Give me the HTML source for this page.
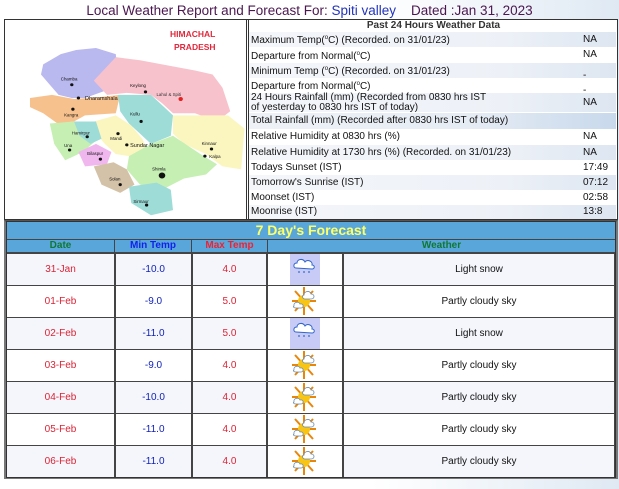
<!DOCTYPE html>
<html><head><meta charset="utf-8"><style>
*{margin:0;padding:0;box-sizing:border-box}
body{width:619px;height:479px;overflow:hidden;background:linear-gradient(90deg,#fff 0%,#fff 60%,#dfe9f3 100%);font-family:"Liberation Sans",Arial,sans-serif;position:relative}
.a{position:absolute}
.title{left:0;top:3px;width:619px;text-align:center;font-size:13.5px;color:#4b1650;white-space:nowrap}
.title span{color:#2233bb}
sup{font-size:6px;vertical-align:0;position:relative;top:-4px}
.box{left:4px;top:19px;width:614px;height:201px;border:1px solid #333;background:#fff}
.map{left:5px;top:20px;width:242px;height:199px;border-right:1px solid #333}
.rt{left:248px;top:20px;width:369px;height:199px;border-left:1px solid #333}
.r{position:absolute;left:249px;width:367px;font-size:10px;color:#111;line-height:11px;padding-left:2px}
.r.g{background:linear-gradient(90deg,#f4f6fa 0%,#edf1f7 70%,#dde6f1 100%)}
.r b{font-weight:normal;position:absolute;left:334px}
.fc{left:4px;top:220px;width:614px;height:259px;border:2px solid #777;border-top:2px solid #555;background:#555}
.fi{left:6px;top:221px;width:610px;height:257px;border:1px solid #333;background:#444}
.tb{left:7px;top:222px;width:608px;height:17px;background:#59a7da;color:#ffff66;font-size:14px;font-weight:bold;text-align:center;line-height:17px}
.h{top:240px;height:12px;background:#59a7da;font-size:10px;font-weight:bold;text-align:center;line-height:12px}
.c{height:31px;font-size:10px;text-align:center;line-height:31px}
</style></head><body>
<div class="a title">Local Weather Report and Forecast For: <span>Spiti valley</span> &nbsp;&nbsp; Dated :Jan 31, 2023</div>
<div class="a box"></div>
<div class="a map">
<svg width="242" height="199" viewBox="5 20 242 199">
<text x="170" y="37" font-size="8.5" font-weight="bold" fill="#e0283c" font-family="Liberation Sans">HIMACHAL</text>
<text x="174" y="50" font-size="8.5" font-weight="bold" fill="#e0283c" font-family="Liberation Sans">PRADESH</text>
<g transform="translate(30,48) scale(1.1,1.02) translate(-30,-46)">
<polygon points="42,62 58,52 72,48 90,46 108,52 110,75 98,88 80,95 68,95 56,92 48,82 40,72" fill="#b9b8ef"/>
<polygon points="88,78 108,55 130,58 150,62 180,68 196,72 205,85 212,108 200,118 180,110 160,110 150,100 140,92 118,90 100,92" fill="#f7c2cc"/>
<polygon points="30,95 50,92 70,96 94,94 112,92 108,110 80,112 70,118 55,120 42,110 30,104" fill="#f7c18d"/>
<polygon points="110,92 140,92 150,102 160,112 158,132 140,140 130,130 120,120 112,108" fill="#9edcd8"/>
<polygon points="88,118 108,112 122,122 132,135 138,148 120,152 108,150 98,140 90,130" fill="#fbf6c0"/>
<polygon points="160,112 190,112 210,112 225,125 222,165 205,162 190,150 170,140 160,130" fill="#fbf6c0"/>
<polygon points="48,120 70,118 88,120 92,135 78,148 62,156 52,140" fill="#c6efb3"/>
<polygon points="70,118 90,118 95,135 85,140 75,132" fill="#9edcd8"/>
<polygon points="74,148 90,140 104,148 100,160 80,162" fill="#f0b7ee"/>
<polygon points="120,152 140,140 160,132 185,150 200,160 190,170 170,174 150,185 130,180 118,165" fill="#c6efb3"/>
<polygon points="88,162 106,158 118,165 125,180 112,188 95,180" fill="#d4c2a8"/>
<polygon points="120,182 145,178 158,185 160,205 140,210 122,198" fill="#9edcd8"/>
<g fill="#111" font-size="4" font-family="Liberation Sans">
<circle cx="68" cy="82" r="1.5"/><text x="58" y="78">Chamba</text>
<circle cx="74" cy="95" r="1.5"/><text x="80" y="97" font-size="5">Dharamshala</text>
<circle cx="69" cy="106" r="1.5"/><text x="61" y="113">Kangra</text>
<circle cx="135" cy="89" r="1.5"/><text x="121" y="84">Keylong</text>
<circle cx="167" cy="96" r="2" fill="#e82020"/><text x="145" y="93" fill="#333">Lahul &amp; Spiti</text>
<circle cx="131" cy="118" r="1.5"/><text x="121" y="112">Kullu</text>
<circle cx="82" cy="133" r="1.5"/><text x="68" y="131">Hamirpur</text>
<circle cx="110" cy="130" r="1.5"/><text x="103" y="136">Mandi</text>
<circle cx="118" cy="141" r="1.5"/><text x="121" y="143" font-size="5">Sundar Nagar</text>
<circle cx="66" cy="146" r="1.5"/><text x="61" y="143">Una</text>
<circle cx="94" cy="155" r="1.5"/><text x="82" y="151">Bilaspur</text>
<circle cx="195" cy="145" r="1.5"/><text x="186" y="141">Kinnaur</text>
<circle cx="189" cy="152" r="1.5"/><text x="193" y="154">Kalpa</text>
<circle cx="150" cy="171" r="3"/><text x="141" y="166">Shimla</text>
<circle cx="112" cy="180" r="1.5"/><text x="102" y="176">Solan</text>
<circle cx="136" cy="200" r="1.5"/><text x="124" y="198">Sirmaur</text>
</g></g></svg></div>
<div class="a rt"></div>
<div class="r" style="top:20px;height:12px;text-align:center;font-weight:bold;color:#333">Past 24 Hours Weather Data</div>
<div class="r g" style="top:32px;height:15px;line-height:18px">Maximum Temp(<sup>o</sup>C) (Recorded. on 31/01/23)<b style="top:2px;line-height:11px">NA</b></div>
<div class="r" style="top:47px;height:16px;line-height:19px">Departure from Normal(<sup>o</sup>C)<b style="top:2px;line-height:11px">NA</b></div>
<div class="r g" style="top:63px;height:15px;line-height:18px">Minimum Temp (<sup>o</sup>C) (Recorded. on 31/01/23)<b style="top:4px">-</b></div>
<div class="r" style="top:78px;height:15px;line-height:18px">Departure from Normal(<sup>o</sup>C)<b style="top:4px">-</b></div>
<div class="r g" style="top:93px;height:19px;line-height:10px;padding-top:0">24 Hours Rainfall (mm) (Recorded from 0830 hrs IST<br>of yesterday to 0830 hrs IST of today)<b style="top:5px">NA</b></div>
<div class="r" style="top:113px;height:16px;line-height:16px;background:linear-gradient(90deg,#eef2f7 0%,#e6ecf4 60%,#c8d9ec 100%)">Total Rainfall (mm) (Recorded after 0830 hrs IST of today)</div>
<div class="r" style="top:129px;height:16px;line-height:16px">Relative Humidity at 0830 hrs (%)<b style="top:0;line-height:16px">NA</b></div>
<div class="r g" style="top:145px;height:15px;line-height:15px">Relative Humidity at 1730 hrs (%) (Recorded. on 31/01/23)<b style="top:0;line-height:15px">NA</b></div>
<div class="r" style="top:160px;height:15px;line-height:15px">Todays Sunset (IST)<b style="top:0;line-height:15px">17:49</b></div>
<div class="r g" style="top:175px;height:15px;line-height:15px">Tomorrow's Sunrise (IST)<b style="top:0;line-height:15px">07:12</b></div>
<div class="r" style="top:190px;height:15px;line-height:15px">Moonset (IST)<b style="top:0;line-height:15px">02:58</b></div>
<div class="r g" style="top:205px;height:14px;line-height:14px">Moonrise (IST)<b style="top:0;line-height:14px">13:8</b></div>

<div class="a fc"></div>
<div class="a fi"></div>
<div class="a tb">7 Day's Forecast</div>
<div class="a h" style="left:7px;width:107px;color:#117733">Date</div>
<div class="a h" style="left:115px;width:76px;color:#1122ee">Min Temp</div>
<div class="a h" style="left:192px;width:75px;color:#ee2233">Max Temp</div>
<div class="a h" style="left:268px;width:347px;color:#117733">Weather</div>
<div id="rows"></div>
<svg width="0" height="0" style="position:absolute"><defs>
<g id="snow"><path d="M6 14 C3 14 3 9 7 9 C7 5 13 4 15 8 C17 5 23 7 22 11 C25 11 25 15 22 15 Z" fill="#fff" stroke="#3366cc" stroke-width="1"/><circle cx="9" cy="18" r="0.9" fill="#3366cc"/><circle cx="14" cy="18" r="0.9" fill="#3366cc"/><circle cx="19" cy="18" r="0.9" fill="#3366cc"/></g>
<g id="pc"><g stroke="#e8860a" stroke-width="2"><line x1="14" y1="1" x2="14" y2="29"/><line x1="2" y1="15" x2="26" y2="15"/><line x1="5" y1="5" x2="23" y2="25"/><line x1="23" y1="5" x2="5" y2="25"/></g><circle cx="14" cy="15" r="6" fill="#f9c515"/><path d="M14 9 C14 5 20 4 21 8 C25 8 25 13 21 13 L15 13 C12 13 12 9 14 9Z" fill="#fff" stroke="#6688aa" stroke-width=".8"/><path d="M4 20 C3 16 9 15 10 18 C14 17 14 22 11 22 L6 22 C3 22 3 20 4 20Z" fill="#fff" stroke="#6688aa" stroke-width=".8"/></g>
</defs></svg>
<script>
var d=[["31-Jan","-10.0","4.0","snow","Light snow"],["01-Feb","-9.0","5.0","pc","Partly cloudy sky"],["02-Feb","-11.0","5.0","snow","Light snow"],["03-Feb","-9.0","4.0","pc","Partly cloudy sky"],["04-Feb","-10.0","4.0","pc","Partly cloudy sky"],["05-Feb","-11.0","4.0","pc","Partly cloudy sky"],["06-Feb","-11.0","4.0","pc","Partly cloudy sky"]];
var h="";d.forEach(function(r,i){var t=254+i*32,bg=i%2?"#fff":"#f4f6fc";
h+='<div class="a c" style="top:'+t+'px;left:7px;width:107px;background:'+bg+';color:#dd2233">'+r[0]+'</div>';
h+='<div class="a c" style="top:'+t+'px;left:116px;width:75px;background:'+bg+';color:#1122bb">'+r[1]+'</div>';
h+='<div class="a c" style="top:'+t+'px;left:193px;width:73px;background:'+bg+';color:#dd2233">'+r[2]+'</div>';
h+='<div class="a c" style="top:'+t+'px;left:268px;width:74px;background:#fff"><div class="a" style="left:22px;top:0;width:30px;height:31px;background:'+(r[3]=="snow"?"#c8cbf5":"#fff")+'"><svg width="30" height="30"><use href="#'+r[3]+'"/></svg></div></div>';
h+='<div class="a c" style="top:'+t+'px;left:344px;width:270px;background:'+bg+';color:#111">'+r[4]+'</div>';});
document.getElementById("rows").innerHTML=h;
</script>
</body></html>
